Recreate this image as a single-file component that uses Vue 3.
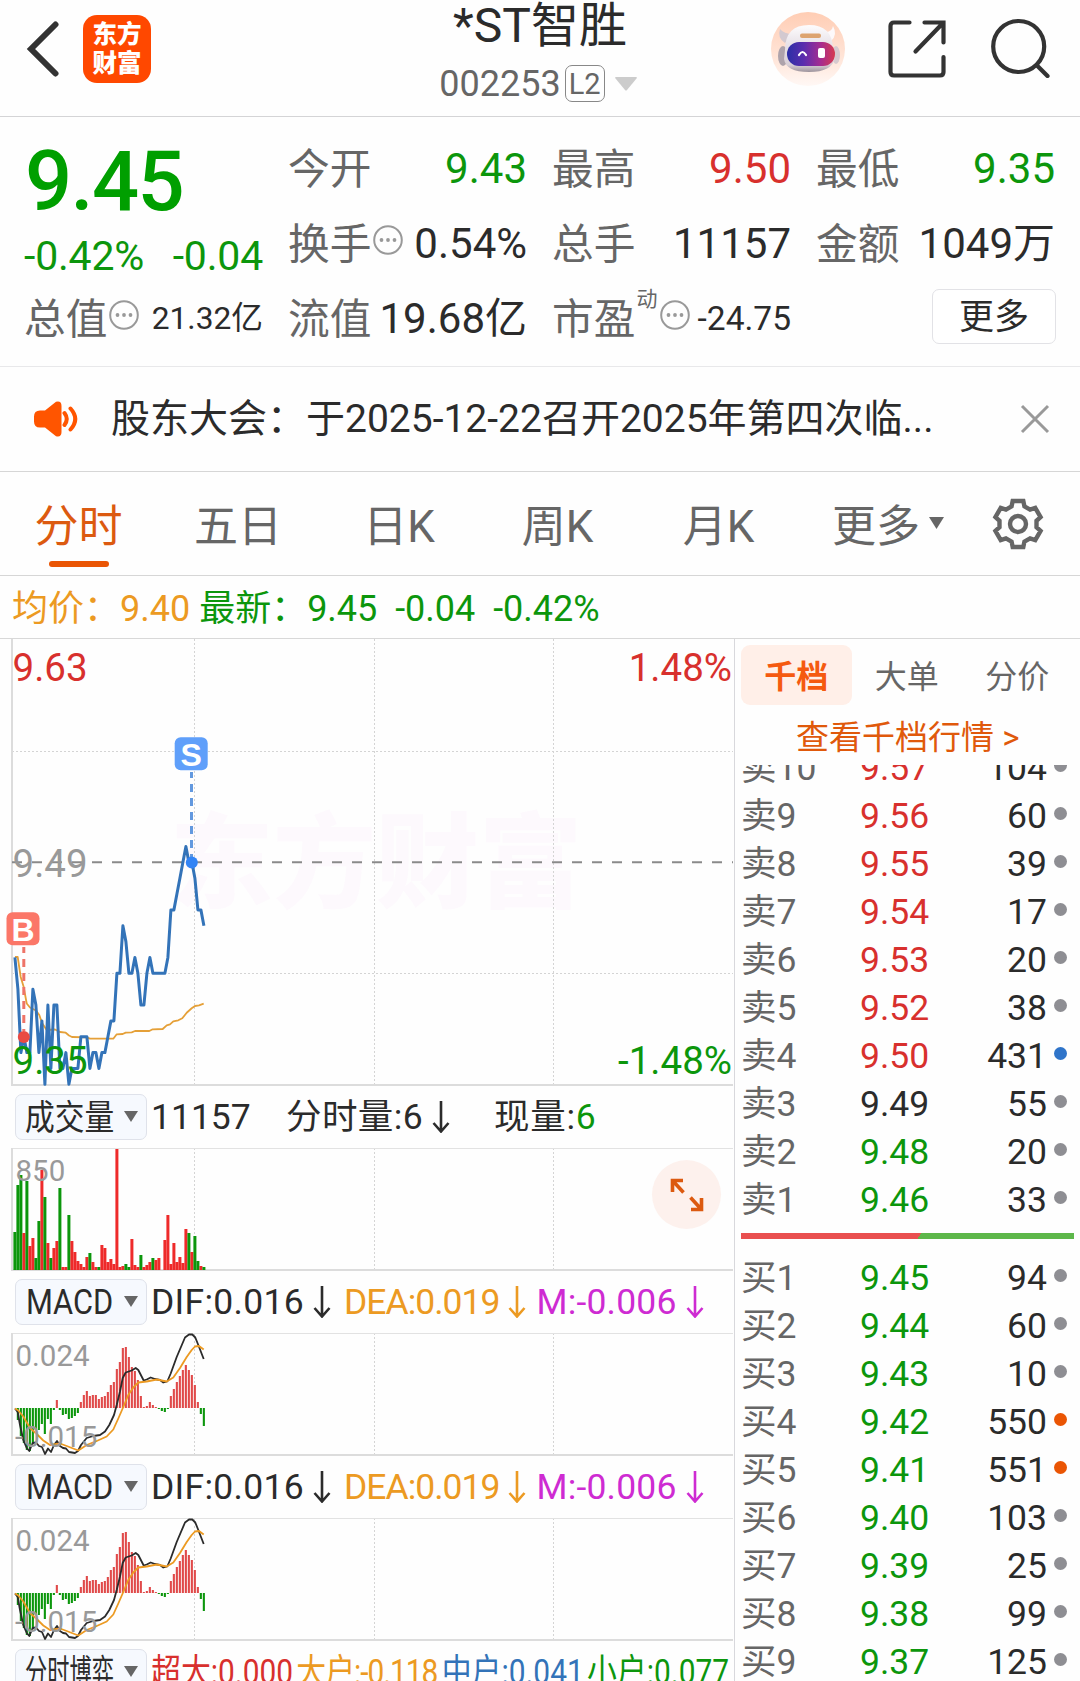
<template>
  <div class="page">
    <header class="header">
      <div class="header-left">
        <svg class="back" viewBox="0 0 34 56"><path d="M30.500 3.500 L6 28 L30.500 52.500" /></svg>
        <div class="logo"><span>东方</span><span>财富</span></div>
      </div>
      <div class="header-title">
        <div class="name">*ST智胜</div>
        <div class="code">
          <span>002253</span>
          <span class="level">L2</span>
          <svg class="drop" viewBox="0 0 22 14"><path d="M1 0 H21 Q22.500 0 21.500 1.500 L12 13 Q11 14 10 13 L.5 1.500 Q-.5 0 1 0Z" /></svg>
        </div>
      </div>
      <div class="header-right">
        <svg class="robot" viewBox="0 0 74 74">
          <defs>
            <linearGradient id="halo" x1="0" y1="0" x2="0" y2="1">
              <stop offset="0" stop-color="#ffcdb4" />
              <stop offset=".65" stop-color="#ffe6da" />
              <stop offset="1" stop-color="#fff8f5" />
            </linearGradient>
            <linearGradient id="visor" x1="0" y1="0" x2="1" y2="0">
              <stop offset="0" stop-color="#2b2fa6" />
              <stop offset=".35" stop-color="#5b2dae" />
              <stop offset=".7" stop-color="#a52c90" />
              <stop offset="1" stop-color="#d63b50" />
            </linearGradient>
            <linearGradient id="shell" x1="0" y1="0" x2="0" y2="1">
              <stop offset="0" stop-color="#fdfcfd" />
              <stop offset=".4" stop-color="#e9e3e9" />
              <stop offset=".85" stop-color="#d8cfd6" />
              <stop offset="1" stop-color="#9d939b" />
            </linearGradient>
          </defs>
          <circle cx="37" cy="37" r="37" fill="url(#halo)" />
          <path d="M9 17 Q6 26 14 31 L22 22 Q13 22 9 17Z" fill="#d3c9d0" />
          <path d="M62 14 Q67 23 60 29 L54 20 Q61 20 62 14Z" fill="#fdf9fb" />
          <ellipse cx="12" cy="44" rx="5" ry="10" fill="#aea3ab" />
          <ellipse cx="65" cy="43" rx="4" ry="9" fill="#d6cacf" />
          <path d="M14 38 Q14 13 38 13 Q61 13 62 36 L64 46 Q61 60 38 60 Q15 60 13 47Z" fill="url(#shell)" />
          <rect x="29" y="21.500" width="21" height="4.500" rx="2" fill="#dda36f" />
          <rect x="16" y="30" width="48" height="24" rx="12" fill="url(#visor)" />
          <path d="M28 43 Q31.500 37 35 43" fill="none" stroke="#fff" stroke-width="2.200" stroke-linecap="round" />
          <rect x="47" y="36" width="7" height="10" rx="2" fill="#fff" />
        </svg>
        <svg class="share" viewBox="0 0 60 60">
          <path d="M22.500 3.500 H7 Q3.500 3.500 3.500 7 V53 Q3.500 56.500 7 56.500 H53 Q56.500 56.500 56.500 53 V38" />
          <path d="M37.500 3.500 H56.500 V23.500 M56 4 L28.500 32.500" />
        </svg>
        <svg class="search" viewBox="0 0 60 60">
          <circle cx="28.700" cy="28.500" r="25.500" />
          <path d="M47 47.500 L57.500 58" />
        </svg>
      </div>
    </header>

    <section class="stats">
      <div class="main-quote">
        <div class="price">9.45</div>
        <div class="change"><span>-0.42%</span><span>-0.04</span></div>
      </div>
      <div v-for="s in stats" :key="s.label" class="stat">
        <span class="stat-label">{{ s.label }}<sup v-if="s.sup">{{ s.sup }}</sup></span>
        <svg v-if="s.tip" class="tip" viewBox="0 0 30 30">
          <circle cx="15" cy="15" r="13.800" />
          <circle v-for="x in [8.5, 15, 21.5]" :key="x" class="tip-dot" :cx="x" cy="15" r="1.900" />
        </svg>
        <span class="stat-value" :class="[s.tone, s.size]">{{ s.value }}</span>
      </div>
      <div class="stat"><button class="more">更多</button></div>
    </section>

    <section class="notice">
      <svg class="speaker" viewBox="0 0 44 36">
        <path d="M6 9.500 H11 L22 .8 Q27.500 -.5 27.500 5 V31 Q27.500 36.500 22 35.200 L11 26.500 H6 Q0 26.500 0 20.500 V15.500 Q0 9.500 6 9.500Z" />
        <path class="wave" d="M30.500 12 Q35 18 30.500 24 M36.500 7.500 Q46 18 36.500 28.500" />
      </svg>
      <span class="notice-text">股东大会：于2025-12-22召开2025年第四次临...</span>
      <svg class="close" viewBox="0 0 30 30"><path d="M2 2 L28 28 M28 2 L2 28" /></svg>
    </section>

    <nav class="tabs">
      <span v-for="(t, i) in tabs" :key="t" class="tab" :class="{ active: i === 0 }">{{ t }}</span>
      <span class="tab tab-more">更多<svg viewBox="0 0 15 12"><path d="M0 0 H15 L7.500 12Z" /></svg></span>
      <svg class="gear" viewBox="-27 -27 54 54">
        <path :d="gearPath" />
        <circle r="8" />
      </svg>
    </nav>

    <div class="quote-line"><span class="avg">均价：9.40&nbsp;</span><span class="green">最新：9.45&nbsp;&nbsp;-0.04&nbsp;&nbsp;-0.42%</span></div>

    <div class="body">
      <div class="charts">
        <svg class="chart" viewBox="0 0 734 447">
          <text class="watermark" x="170" y="261">东方财富</text>
          <path class="grid" d="M194.500 0 V445 M374.500 0 V445 M553.500 0 V445 M12 112.500 H733 M12 334.500 H733" />
          <path class="frame" d="M12 0 V446 H733" />
          <path class="middle" d="M12 223.300 H733" />
          <text class="axis gray" x="12.500" y="237.800">9.49</text>
          <path class="line-avg" :d="avgPath" />
          <path class="line-price" :d="pricePath" />
          <path class="drop-line buy" d="M23.800 308 V392" />
          <circle class="mark buy" cx="23.800" cy="398" r="6" />
          <path class="drop-line sell" d="M191.500 133 V219" />
          <circle class="mark sell" cx="191.800" cy="223.500" r="6" />
          <rect class="mark buy" x="6.500" y="273.300" width="33" height="33" rx="6" />
          <text class="mark-text" x="23" y="301.500">B</text>
          <rect class="mark sell" x="174.700" y="98.300" width="33" height="33" rx="6" />
          <text class="mark-text" x="191.200" y="126.500">S</text>
          <text class="axis red" x="12.500" y="42">9.63</text>
          <text class="axis red end" x="732" y="42">1.48%</text>
          <text class="axis green" x="12.500" y="435">9.35</text>
          <text class="axis green end" x="732" y="435">-1.48%</text>
        </svg>

        <div class="toolbar">
          <div class="picker"><span class="squeeze">成交量</span><i></i></div>
          <div class="values">
            <span class="v-total">11157</span>
            <span class="v-minute">分时量:6</span><svg class="arrow" viewBox="0 0 18 32"><path :d="arrow" /></svg>
            <span class="v-now">现量:<b class="green">6</b></span>
          </div>
        </div>
        <div class="pane-wrap">
          <svg class="pane" viewBox="0 0 734 123">
            <path class="grid" d="M194.500 0 V121 M374.500 0 V121 M553.500 0 V121" />
            <path class="pane-top" d="M12 .5 H733" />
            <path class="frame" d="M12 0 V122 H733" />
            <rect
              v-for="(v, i) in volumes" :key="i"
              :class="v > 0 ? 'up' : 'down'"
              :x="13.4 + 3 * i" :y="122 - Math.abs(v)" width="3" :height="Math.abs(v)"
            />
            <text class="scale" x="15.500" y="32.500">850</text>
          </svg>
          <div class="expand">
            <svg viewBox="0 0 34 34"><path d="M2.500 14 V2.500 H13 M3 3 L13.500 14.500 M31.500 20 V31.500 H21 M31 31 L20.500 19.500" /></svg>
          </div>
        </div>

        <template v-for="n in 2" :key="n">
          <div class="toolbar">
            <div class="picker"><span class="squeeze macd">MACD</span><i></i></div>
            <div class="values">
              <span class="v-dif">DIF:0.016</span><svg class="arrow" viewBox="0 0 18 32"><path :d="arrow" /></svg>
              <span class="v-dea avg">DEA:0.019</span><svg class="arrow avg" viewBox="0 0 18 32"><path :d="arrow" /></svg>
              <span class="v-m magenta">M:-0.006</span><svg class="arrow magenta" viewBox="0 0 18 32"><path :d="arrow" /></svg>
            </div>
          </div>
          <svg class="pane" viewBox="0 0 734 123">
            <path class="grid" d="M194.500 0 V121 M374.500 0 V121 M553.500 0 V121" />
            <path class="pane-top" d="M12 .5 H733" />
            <path class="frame" d="M12 0 V122 H733" />
            <rect
              v-for="(v, i) in macd" :key="i"
              :class="v > 0 ? 'up-thin' : 'down'"
              :x="13.8 + 3 * i" :y="v > 0 ? 75 - v : 75" width="2.1" :height="Math.abs(v)"
            />
            <path class="line-dif" :d="difPath" />
            <path class="line-dea" :d="deaPath" />
            <text class="scale" x="15.500" y="33">0.024</text>
            <text class="scale" x="15" y="114">-0.015</text>
          </svg>
        </template>

        <div class="toolbar">
          <div class="picker"><span class="squeeze game">分时博弈</span><i></i></div>
          <div class="values flow">
            <span class="red">超大:0.000</span>
            <span class="avg tight">大户:-0.118</span>
            <span class="blue">中户:0.041</span>
            <span class="green">小户:0.077</span>
          </div>
        </div>
      </div>

      <aside class="book">
        <div class="book-tabs">
          <span class="book-tab active">千档</span>
          <span class="book-tab">大单</span>
          <span class="book-tab">分价</span>
        </div>
        <div class="book-link">查看千档行情 &gt;</div>
        <div class="asks">
          <div v-for="r in asks" :key="r[0]" class="row">
            <span class="row-label">{{ r[0] }}</span>
            <span class="row-price" :class="tone(r[1])">{{ r[1] }}</span>
            <span class="row-count">{{ r[2] }}</span>
            <i class="dot" :class="r[3]"></i>
          </div>
        </div>
        <div class="ratio"></div>
        <div class="bids">
          <div v-for="r in bids" :key="r[0]" class="row">
            <span class="row-label">{{ r[0] }}</span>
            <span class="row-price" :class="tone(r[1])">{{ r[1] }}</span>
            <span class="row-count">{{ r[2] }}</span>
            <i class="dot" :class="r[3]"></i>
          </div>
        </div>
      </aside>
    </div>
  </div>
</template>

<script setup>
const stats = [
  { label: '今开', value: '9.43', tone: 'green' },
  { label: '最高', value: '9.50', tone: 'red' },
  { label: '最低', value: '9.35', tone: 'green' },
  { label: '换手', value: '0.54%', tip: true },
  { label: '总手', value: '11157' },
  { label: '金额', value: '1049万' },
  { label: '总值', value: '21.32亿', tip: true, size: 'small' },
  { label: '流值', value: '19.68亿' },
  { label: '市盈', sup: '动', value: '-24.75', tip: true, size: 'medium' },
]

const tabs = ['分时', '五日', '日K', '周K', '月K']

const asks = [
  ['卖10', '9.57', 104],
  ['卖9', '9.56', 60],
  ['卖8', '9.55', 39],
  ['卖7', '9.54', 17],
  ['卖6', '9.53', 20],
  ['卖5', '9.52', 38],
  ['卖4', '9.50', 431, 'dot-blue'],
  ['卖3', '9.49', 55],
  ['卖2', '9.48', 20],
  ['卖1', '9.46', 33],
]

const bids = [
  ['买1', '9.45', 94],
  ['买2', '9.44', 60],
  ['买3', '9.43', 10],
  ['买4', '9.42', 550, 'dot-orange'],
  ['买5', '9.41', 551, 'dot-orange'],
  ['买6', '9.40', 103],
  ['买7', '9.39', 25],
  ['买8', '9.38', 99],
  ['买9', '9.37', 125],
]

// цвет относительно вчерашнего закрытия
const tone = (p) => (p > 9.49 ? 'red' : p < 9.49 ? 'green' : '')

const arrow = 'M9 0 V30 M1.500 22 L9 30.500 L16.500 22'

// цена по минутам, сотые доли после 9
const prices = [
  43, 41, 37, 38, 37, 37, 41, 40, 37, 39, 35, 40, 36, 40, 40, 36,
  36, 37, 35, 36, 36, 36, 38, 38, 38, 36, 37, 37, 36, 37, 37, 38,
  39, 39, 42, 42, 45, 44, 42, 42, 43, 42, 40, 40, 42, 43, 42, 42,
  42, 42, 42, 43, 46, 46, 47, 48, 49, 50, 49, 49, 48, 46, 46, 45,
]

// объёмы: плюс - красный столбик, минус - зелёный
const volumes = [
  -38, -85, -95, 37, -89, 24, 32, -12, -49, 100, -73, 27, -12, 22, 29, -82,
  3, 3, -55, 29, 18, 9, 6, 3, 13, -17, 8, 3, -3, 25, 22, 8,
  11, 6, 121, 3, 4, -6, -3, 31, 5, 3, -15, 3, 5, 8, -12, 10,
  12, 0, 30, 55, 6, 27, 8, 13, 7, 41, -37, 18, -34, -9, 4, -3,
]

const macd = [
  0, -12, -28, -35, -42, -43, -36, -22, -22, -16, -26, -11, -16, -2, 8, -2,
  -7, -6, -11, -10, -8, -5, 6, 13, 17, 12, 13, 13, 9, 11, 12, 16,
  23, 26, 39, 46, 60, 61, 51, 41, 37, 28, 12, 1, 2, 6, 3, 1,
  -1, -3, -4, -1, 12, 19, 26, 32, 38, 43, 38, 33, 23, 6, -6, -18,
]

const toPath = (points) => 'M' + points.map((p) => p.join(' ')).join(' L')

const pricePath = toPath(prices.map((p, i) => [14.9 + 3 * i, 223.3 + (49 - p) * 15.86]))

const avgPath = toPath([
  [15, 318], [17.7, 318], [20.7, 338], [23.7, 348], [26.7, 364.5], [30, 368.5], [36, 371.5],
  [39.3, 376], [42, 384], [46.7, 391], [55, 390.5], [60, 393], [65.7, 393.7], [69, 396.5],
  [72, 398], [86.7, 398.3], [90, 399.7], [113.3, 399.7], [116.7, 395.3], [122.7, 395],
  [125.7, 393.7], [131.7, 393.3], [135, 392], [149.3, 392], [152.7, 390.3], [162.7, 390],
  [166.7, 386.3], [170, 385.3], [173.3, 382.3], [178.3, 381.3], [182.3, 379.3], [186.7, 373.7],
  [191.7, 369.3], [195, 367], [199, 366.3], [203.7, 364.7],
])

const difPath = toPath([
  [15, 75.5], [17.7, 79], [20, 92], [23.3, 107], [26.7, 115], [29.3, 118], [32.7, 110],
  [36, 109.5], [39, 113], [42, 114], [45, 121], [48, 115.5], [51, 119], [54, 112], [57, 108],
  [60, 113], [63, 115], [66, 115.5], [69, 119], [75, 120], [78, 118], [81, 112], [86.7, 105],
  [93.3, 103], [100, 102], [105, 98.5], [109.3, 92], [114, 82], [116.7, 72], [120, 58.5],
  [122.7, 45], [125.7, 39.5], [131.7, 37.5], [135.7, 35], [138.3, 37], [143.7, 47.5],
  [146.7, 46.5], [150.7, 44.5], [155, 46], [160, 47], [163.3, 49.5], [167.3, 48.5],
  [170.7, 40.5], [176.7, 24], [185, 4.5], [189, 1.5], [192.3, 1.5], [195.3, 4.5], [198.3, 12],
  [203.7, 26],
])

const deaPath = toPath([
  [15, 75.5], [18.3, 77.5], [23.3, 83.5], [30, 95], [36.7, 101], [43.3, 107.5], [50, 112],
  [60, 110.5], [66.7, 113], [78.3, 117.5], [86.7, 112], [96.7, 108], [106.7, 103.5],
  [113.3, 96.5], [118.3, 85.5], [123.3, 74], [128.3, 62], [133.3, 54.5], [138.3, 49.5],
  [146.7, 48.5], [156.7, 46.5], [166.7, 48.5], [173.3, 44.5], [180, 35], [186.7, 24],
  [191.7, 17], [195, 13.5], [199, 13], [203.7, 16.5],
])

// шестерёнка с шестью зубьями
const gearPoints = []
for (let k = 0; k < 6; k++) {
  for (const [r, a] of [[18.8, -20], [23.6, -13], [23.6, 13], [18.8, 20]]) {
    const rad = ((60 * k - 90 + a) * Math.PI) / 180
    gearPoints.push([(r * Math.cos(rad)).toFixed(2), (r * Math.sin(rad)).toFixed(2)])
  }
}
const gearPath = toPath(gearPoints) + 'Z'
</script>

<style>
body {
  background: #fefefe;
}
</style>

<style scoped>
.page {
  width: 1080px;
  height: 1681px;
  overflow: hidden;
  background: #fefefe;
  color: #2b2b2b;
  font-family: Roboto, "Noto Sans CJK SC", sans-serif;
  white-space: nowrap;
}
svg {
  display: block;
  flex: none;
}
.red { color: #d8302d; fill: #d8302d; }
.green { color: #0c960c; fill: #0c960c; }
.avg { color: #ec9a22; }
.blue { color: #3373b8; }
.magenta { color: #ce2bd2; }
.gray { fill: #999; }

/* Шапка */
.header {
  display: grid;
  grid-template-columns: 1fr auto 1fr;
  height: 116px;
  border-bottom: 1px solid #d4d4d6;
}
.header-left {
  display: flex;
  align-items: flex-start;
  padding: 15px 0 0 24px;
}
.back {
  width: 34px;
  height: 56px;
  margin: 6px 24px 0 1px;
  fill: none;
  stroke: #333;
  stroke-width: 6;
  stroke-linecap: round;
}
.logo {
  display: flex;
  flex-direction: column;
  justify-content: center;
  width: 68px;
  height: 68px;
  border-radius: 14px;
  background: #ff4800;
  color: #fff;
  font-size: 24.5px;
  font-weight: 900;
  line-height: 29px;
  text-align: center;
}
.header-title {
  text-align: center;
}
.name {
  font-size: 48px;
  line-height: 52px;
}
.code {
  display: flex;
  align-items: center;
  justify-content: center;
  height: 64px;
  padding-right: 4px;
  font-size: 36px;
  color: #666;
}
.level {
  width: 38px;
  height: 35px;
  margin: -1px 10px 0 4px;
  border: 1px solid #888;
  border-radius: 7px;
  font-size: 29px;
  line-height: 36px;
  text-align: center;
}
.drop {
  width: 22px;
  height: 14px;
  margin-top: -1px;
  fill: #ccc;
}
.header-right {
  display: flex;
  align-items: flex-start;
  justify-content: flex-end;
  padding-right: 30px;
}
.robot {
  width: 74px;
  height: 74px;
  margin: 12px 42px 0 0;
}
.share, .search {
  width: 60px;
  height: 60px;
  margin-top: 19px;
  fill: none;
  stroke: #333;
  stroke-width: 4.2;
  stroke-linecap: round;
}
.share { margin-right: 43px; }
.search { margin-top: 18px; }

/* Котировка */
.stats {
  display: grid;
  grid-template-columns: repeat(4, 238px);
  grid-template-rows: repeat(3, 75px);
  column-gap: 26px;
  padding: 14px 0 10px 25px;
  border-bottom: 1px solid #e8e8ea;
}
.main-quote {
  grid-row: span 2;
  color: #009f00;
}
.price {
  font-size: 83px;
  font-weight: 500;
  line-height: 101px;
  letter-spacing: -1.6px;
}
.change {
  display: flex;
  justify-content: space-between;
  margin-left: -1px;
  font-size: 41px;
  line-height: 48px;
  letter-spacing: -.2px;
  color: #0c960c;
}
.stat {
  display: flex;
  align-items: center;
  font-size: 42px;
  line-height: 75px;
}
.stat-label {
  padding-top: 3px;
  margin-left: -1px;
  font-size: 41.7px;
  line-height: 72px;
  color: #666;
}
sup {
  display: inline-block;
  width: 22px;
  margin-left: 1px;
  font-size: 21px;
  line-height: 20px;
  vertical-align: 28px;
}
.tip {
  width: 30px;
  height: 30px;
  margin: -8px 0 0 2px;
  fill: none;
  stroke: #999;
  stroke-width: 2;
}
.tip-dot {
  fill: #999;
  stroke: none;
}
.stat-value {
  margin-left: auto;
}
.small { font-size: 31.7px; }
.medium { font-size: 33.5px; }
.more {
  width: 124px;
  height: 55px;
  margin: -5px -1px 0 auto;
  padding: 2px 0 0;
  border: 1px solid #e2e2e6;
  border-radius: 7px;
  background: #fff;
  color: #2b2b2b;
  font: 35px/51px Roboto, "Noto Sans CJK SC", sans-serif;
}

/* Объявление */
.notice {
  display: flex;
  align-items: center;
  height: 104px;
  padding: 0 30px 0 34px;
  border-bottom: 1px solid #d6d6d6;
}
.speaker {
  width: 44px;
  height: 36px;
  margin-right: 33px;
  fill: #ff5500;
}
.wave {
  fill: none;
  stroke: #ff5500;
  stroke-width: 4;
  stroke-linecap: round;
}
.notice-text {
  padding-top: 1px;
  font-size: 39px;
  line-height: 103px;
}
.close {
  width: 30px;
  height: 30px;
  margin-left: auto;
  fill: none;
  stroke: #999;
  stroke-width: 3;
}

/* Периоды */
.tabs {
  display: grid;
  grid-template-columns: 157px 162px 160px 157px 165px 174px auto;
  grid-template-rows: 103px;
  align-items: center;
  border-bottom: 1px solid #d6d6d6;
  font-size: 44px;
  color: #666;
}
.tab {
  height: 103px;
  line-height: 110px;
  text-align: center;
}
.tab.active {
  display: flex;
  flex-direction: column;
  align-items: center;
  color: #dc5a10;
}
.tab.active::after {
  content: "";
  flex: none;
  width: 60px;
  height: 6px;
  margin-top: -21px;
  border-radius: 3px;
  background: #ea5504;
}
.tab-more {
  display: flex;
  align-items: flex-start;
  justify-content: center;
}
.tab-more svg {
  width: 15px;
  height: 12px;
  margin: 45px 0 0 9px;
  fill: #666;
}
.gear {
  width: 54px;
  height: 54px;
  margin-left: 16px;
  fill: none;
  stroke: #666;
  stroke-width: 4.4;
}

.quote-line {
  height: 62px;
  padding-left: 12px;
  border-bottom: 1px solid #d8d8d8;
  font-size: 36px;
  line-height: 66px;
}

/* Графики */
.body {
  display: flex;
}
.charts {
  width: 734px;
}
.chart {
  width: 734px;
  height: 447px;
}
.grid {
  fill: none;
  stroke: #d4d4d4;
  stroke-width: 1;
  stroke-dasharray: 2 2;
}
.frame {
  fill: none;
  stroke: #dcdcdc;
  stroke-width: 2;
}
.pane-top {
  stroke: #e2e2e2;
}
.middle {
  stroke: #8a8a8a;
  stroke-width: 2;
  stroke-dasharray: 10 10;
}
.watermark {
  font-size: 103px;
  font-weight: 900;
  fill: #fdf9fd;
}
.axis {
  font-size: 38.5px;
}
.end {
  text-anchor: end;
}
.line-price, .line-avg, .line-dif, .line-dea {
  fill: none;
  stroke-linejoin: round;
}
.line-price {
  stroke: #3373b8;
  stroke-width: 3;
}
.line-avg {
  stroke: #e5a038;
  stroke-width: 1.8;
}
.line-dif {
  stroke: #2b2b2b;
  stroke-width: 1.8;
}
.line-dea {
  stroke: #ec9a22;
  stroke-width: 1.8;
}
.drop-line {
  fill: none;
  stroke-width: 3;
  stroke-dasharray: 8 6;
  stroke-dashoffset: 2;
}
.drop-line.buy { stroke: #ee7468; }
.drop-line.sell { stroke: #6399df; }
rect.buy { fill: #fb7768; }
rect.sell { fill: #5f9ffa; }
circle.buy { fill: #ea4a42; }
circle.sell { fill: #3284f5; }
.mark-text {
  fill: #fff;
  font-family: "Liberation Sans", sans-serif;
  font-size: 32px;
  font-weight: 700;
  text-anchor: middle;
}
.toolbar {
  display: flex;
  align-items: center;
  height: 62px;
  padding-left: 15px;
}
.picker {
  display: flex;
  flex: none;
  align-items: center;
  justify-content: space-between;
  width: 132px;
  height: 46px;
  box-sizing: border-box;
  margin-top: -1px;
  padding: 0 8px 0 9px;
  border: 1px solid #dfe2ea;
  border-radius: 7px;
  background: #f6f9fe;
}
.picker i {
  flex: none;
  border: 7px solid transparent;
  border-top: 11px solid #666;
  border-bottom: 0;
}
.squeeze {
  width: 90px;
  padding-top: 4px;
  font-size: 35px;
  line-height: 40px;
  transform: scaleX(.85);
  transform-origin: left;
}
.squeeze.macd {
  padding: 2px 0 0 1px;
  transform: scaleX(.88);
}
.squeeze.game { transform: scaleX(.635); }
.values {
  display: flex;
  align-items: center;
  margin-left: 4px;
  font-size: 35.5px;
  line-height: 64px;
}
.v-total { width: 135px; }
.v-minute { letter-spacing: .4px; }
.v-now {
  margin-left: 31px;
  letter-spacing: .7px;
}
.v-now b { font-weight: 400; }
.v-dif { letter-spacing: .3px; }
.v-dea { letter-spacing: -1px; }
.v-m { letter-spacing: .2px; }
.arrow {
  width: 18px;
  height: 32px;
  margin: 0 13px 0 9px;
  fill: none;
  stroke: currentColor;
  stroke-width: 2.6;
}
.arrow.avg { margin-right: 10px; }
/* каждая подпись занимает четверть ширины */
.flow {
  display: grid;
  grid-template-columns: repeat(4, 172.6px);
  transform: scaleX(.842);
  transform-origin: left;
}
.tight { letter-spacing: -1.25px; }
.pane-wrap {
  position: relative;
}
.pane {
  width: 734px;
  height: 123px;
}
.up { fill: #ee2a2a; }
.down { fill: #0c960c; }
.up-thin { fill: #e04a4a; }
.scale {
  font-size: 29.5px;
  fill: #999;
}
.expand {
  position: absolute;
  top: 12px;
  left: 652px;
  display: flex;
  align-items: center;
  justify-content: center;
  width: 69px;
  height: 69px;
  border-radius: 50%;
  background: #fdf1ed;
}
.expand svg {
  width: 34px;
  height: 34px;
  fill: none;
  stroke: #dc5a10;
  stroke-width: 3.6;
}

/* Стакан */
.book {
  width: 345px;
  border-left: 1px solid #d8d8dc;
}
.book-tabs {
  display: flex;
  padding: 6px 0 0 6px;
}
.book-tab {
  width: 110.5px;
  height: 60px;
  font-size: 32px;
  line-height: 65px;
  text-align: center;
  color: #666;
}
.book-tab.active {
  border-radius: 9px;
  background: #ffefe8;
  color: #f55a10;
  font-weight: 700;
}
.book-link {
  height: 60px;
  padding-left: 61px;
  font-size: 33px;
  line-height: 66px;
  color: #e0590b;
}
.asks {
  display: flex;
  flex-direction: column;
  justify-content: flex-end;
  height: 458px;
  overflow: hidden;
}
.row {
  display: flex;
  flex: none;
  align-items: center;
  height: 48px;
  padding-left: 6px;
  font-size: 35.5px;
  line-height: 48px;
}
.row span {
  padding-top: 2px;
}
.row-label {
  width: 119px;
  color: #666;
}
.row-price {
  width: 90px;
}
.row-count {
  width: 97px;
  text-align: right;
}
.dot {
  width: 13px;
  height: 13px;
  margin: -4px 0 0 7px;
  border-radius: 50%;
  background: #8e8e93;
}
.dot-blue { background: #2f74c9; }
.dot-orange { background: #ea5504; }
.ratio {
  height: 6px;
  margin: 10px 6px 14px;
  background: linear-gradient(120deg, #e94f4f 53.5%, #5db74a 53.5%);
}
</style>
